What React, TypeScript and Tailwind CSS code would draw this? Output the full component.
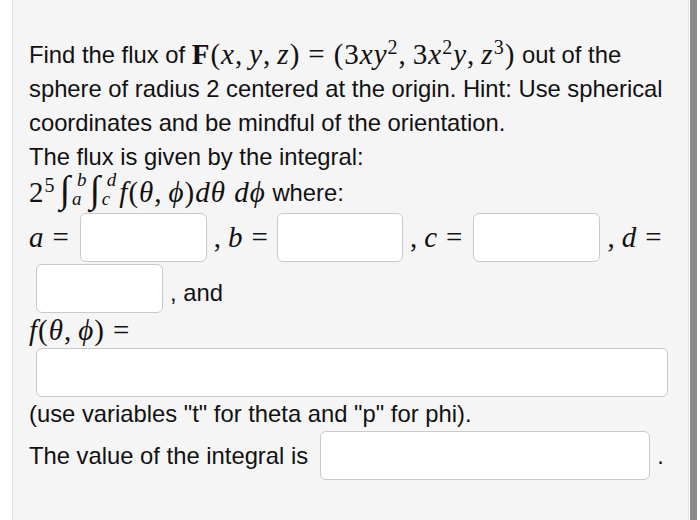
import type { ReactNode } from 'react';

const sans = { fontFamily: '"Liberation Sans", Arial, sans-serif' };
const serif = { fontFamily: '"Liberation Serif", "Times New Roman", serif' };

function M({ children, className = '' }: { children: ReactNode; className?: string }) {
  return (
    <span className={`text-[29px] tracking-[1px] ${className}`} style={serif}>
      {children}
    </span>
  );
}

function V({ children }: { children: ReactNode }) {
  return <i className="italic">{children}</i>;
}

function Sup({ children }: { children: ReactNode }) {
  return <sup className="text-[20px]">{children}</sup>;
}

function Eq() {
  return <span className="mx-[8px]">=</span>;
}

function C() {
  return <span className="mr-[6px]">,</span>;
}

function Box({ className = '' }: { className?: string }) {
  return (
    <input
      type="text"
      className={`rounded-[6px] border border-[#c9c9c9] bg-white outline-none ${className}`}
    />
  );
}

function Integral({ lower, upper }: { lower: string; upper: string }) {
  return (
    <span className="inline-flex h-[34px] items-stretch">
      <span className="text-[38px] italic leading-[34px]">∫</span>
      <span className="ml-[1px] flex flex-col justify-between text-[19px] italic leading-[15px] tracking-normal">
        <span className="ml-[5px]">{upper}</span>
        <span>{lower}</span>
      </span>
    </span>
  );
}

export default function App() {
  return (
    <div className="flex h-[520px] w-[700px] bg-white text-[#111]" style={sans}>
      <div className="ml-[12px] h-full w-[677px] border-x border-[#e2e2e2] bg-[#f5f5f5] pl-[16px] pt-[38px] text-[23.8px]">
        <div className="flex h-[34px] items-center whitespace-nowrap">
          <span>Find the flux of&nbsp;</span>
          <M className="tracking-[1.5px]">
            <b className="font-bold">F</b>(<V>x</V>
            <C />
            <V>y</V>
            <C />
            <V>z</V>)<Eq />
            (3<V>xy</V>
            <Sup>2</Sup>
            <C />
            3<V>x</V>
            <Sup>2</Sup>
            <V>y</V>
            <C />
            <V>z</V>
            <Sup>3</Sup>)
          </M>
          <span>&nbsp;out of the</span>
        </div>
        <div className="flex h-[34px] items-center whitespace-nowrap">
          sphere of radius 2 centered at the origin. Hint: Use spherical
        </div>
        <div className="flex h-[34px] items-center whitespace-nowrap">
          coordinates and be mindful of the orientation.
        </div>
        <div className="flex h-[34px] items-center whitespace-nowrap">The flux is given by the integral:</div>
        <div className="flex h-[38px] items-center whitespace-nowrap">
          <M className="inline-flex items-center">
            <span>
              2<Sup>5</Sup>
            </span>
            <span className="ml-[4px]">
              <Integral lower="a" upper="b" />
            </span>
            <span className="ml-[3px]">
              <Integral lower="c" upper="d" />
            </span>
            <span className="ml-[3px]">
              <V>f</V>(<V>θ</V>
              <C />
              <V>ϕ</V>)<V>dθ</V>&nbsp;<V>dϕ</V>
            </span>
          </M>
          <span>&nbsp;where:</span>
        </div>
        <div className="mt-[1px] flex items-center whitespace-nowrap">
          <M>
            <V>a</V>
            <Eq />
          </M>
          <Box className="ml-[2px] h-[49px] w-[127px]" />
          <M className="ml-[7px]">
            <C />
            <V>b</V>
            <Eq />
          </M>
          <Box className="ml-[0px] h-[49px] w-[126px]" />
          <M className="ml-[7px]">
            <C />
            <V>c</V>
            <Eq />
          </M>
          <Box className="ml-[2px] h-[49px] w-[127px]" />
          <M className="ml-[7px]">
            <C />
            <V>d</V>
            <Eq />
          </M>
        </div>
        <div className="mt-[2px] flex items-center whitespace-nowrap">
          <Box className="ml-[7px] h-[49px] w-[127px]" />
          <span className="ml-[7px] mt-[8px]">, and</span>
        </div>
        <div className="flex h-[35px] items-center whitespace-nowrap">
          <M>
            <V>f</V>(<V>θ</V>
            <C />
            <V>ϕ</V>)<Eq />
          </M>
        </div>
        <Box className="ml-[7px] block h-[49px] w-[632px]" />
        <div className="flex h-[34px] items-center whitespace-nowrap">
          (use variables "t" for theta and "p" for phi).
        </div>
        <div className="flex items-center whitespace-nowrap">
          <span>The value of the integral is</span>
          <Box className="ml-[12px] h-[49px] w-[330px]" />
          <span className="ml-[7px]">.</span>
        </div>
      </div>
      <div className="ml-[1px] h-full w-[7px] bg-[#8a8a8a]" />
    </div>
  );
}
